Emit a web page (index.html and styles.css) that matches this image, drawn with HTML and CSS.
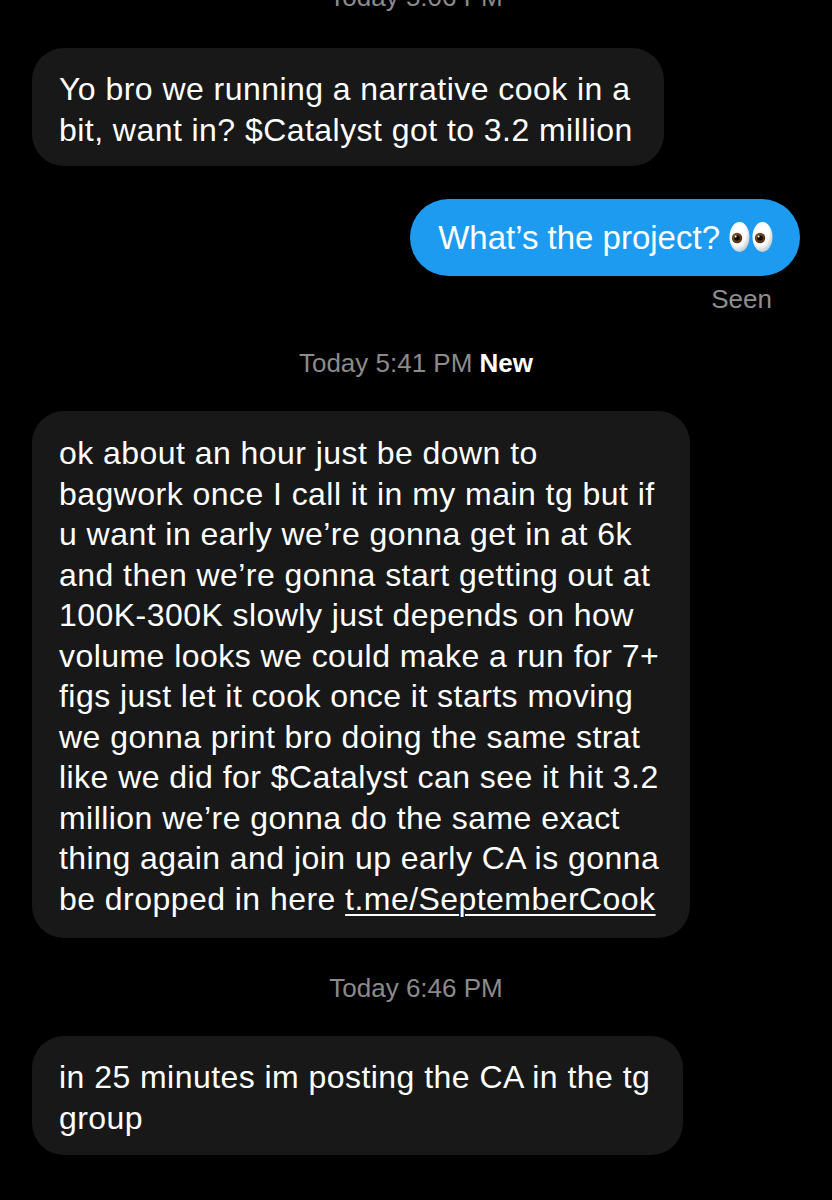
FILE: index.html
```html
<!DOCTYPE html>
<html>
<head>
<meta charset="utf-8">
<link rel="stylesheet" href="styles.css">
</head>
<body>
<div class="chat">
  <div class="stamp stamp-top">Today 5:06 PM</div>

  <div class="bubble in b1">Yo bro we running a narrative cook in a<br>bit, want in? $Catalyst got to 3.2 million</div>

  <div class="bubble out">What’s the project? <svg class="eyes" viewBox="0 0 44 32" width="44" height="32" aria-hidden="true">
      <defs>
        <radialGradient id="w" cx="0.4" cy="0.35" r="0.7">
          <stop offset="0.6" stop-color="#ffffff"/>
          <stop offset="1" stop-color="#b9c2c8"/>
        </radialGradient>
        <radialGradient id="ir" cx="0.4" cy="0.4" r="0.6">
          <stop offset="0" stop-color="#a0662a"/>
          <stop offset="1" stop-color="#4a2a0e"/>
        </radialGradient>
      </defs>
      <ellipse cx="10.5" cy="16" rx="10" ry="15" fill="url(#w)"/>
      <ellipse cx="33.5" cy="16" rx="10" ry="15" fill="url(#w)"/>
      <circle cx="8" cy="17" r="5.2" fill="url(#ir)"/>
      <circle cx="8" cy="17" r="2.8" fill="#120a04"/>
      <circle cx="31" cy="17" r="5.2" fill="url(#ir)"/>
      <circle cx="31" cy="17" r="2.8" fill="#120a04"/>
      <circle cx="6.6" cy="15.4" r="1" fill="#fff"/>
      <circle cx="29.6" cy="15.4" r="1" fill="#fff"/>
    </svg></div>
  <div class="seen">Seen</div>

  <div class="stamp stamp-mid">Today 5:41 PM <span class="new">New</span></div>

  <div class="bubble in b2">ok about an hour just be down to<br>bagwork once I call it in my main tg but if<br>u want in early we’re gonna get in at 6k<br>and then we’re gonna start getting out at<br>100K-300K slowly just depends on how<br>volume looks we could make a run for 7+<br>figs just let it cook once it starts moving<br>we gonna print bro doing the same strat<br>like we did for $Catalyst can see it hit 3.2<br>million we’re gonna do the same exact<br>thing again and join up early CA is gonna<br>be dropped in here <span class="link">t.me/SeptemberCook</span></div>

  <div class="stamp stamp-low">Today 6:46 PM</div>

  <div class="bubble in b3">in 25 minutes im posting the CA in the tg<br>group</div>
</div>
</body>
</html>
```

FILE: styles.css
```css
html, body {
  margin: 0;
  padding: 0;
  background: #000;
}

body {
  width: 832px;
  height: 1200px;
  overflow: hidden;
  font-family: "Liberation Sans", Arial, sans-serif;
  color: #fff;
}

.chat {
  display: flex;
  flex-direction: column;
  padding: 0 32px;
}

.stamp {
  align-self: center;
  color: #8b8b8b;
  font-size: 26px;
  line-height: 30px;
  white-space: nowrap;
}

.stamp-top {
  margin-top: -18px;
}

.stamp-mid {
  margin-top: 34px;
}

.stamp-low {
  margin-top: 35px;
}

.new {
  color: #fff;
  font-weight: bold;
}

.bubble {
  font-size: 32px;
  line-height: 40.5px;
  white-space: nowrap;
}

.in {
  align-self: flex-start;
  background: #181818;
  border-radius: 32px;
  padding: 21px 31px 16px 27px;
  letter-spacing: 0.45px;
}

.b1 {
  margin-top: 36px;
}

.b2 {
  margin-top: 33px;
  padding-top: 22px;
  padding-bottom: 19px;
}

.b3 {
  margin-top: 33px;
  padding-right: 33px;
  padding-bottom: 17px;
}

.out {
  align-self: flex-end;
  background: #1d9bf0;
  border-radius: 39px;
  padding: 18px 27px 18px 28px;
  font-size: 33px;
  letter-spacing: 0;
  line-height: 41px;
  margin-top: 33px;
  display: flex;
  align-items: center;
  gap: 9px;
}

.eyes {
  flex: none;
  margin-top: -1px;
}

.seen {
  align-self: flex-end;
  margin-right: 28px;
  margin-top: 8px;
  color: #8e8e8e;
  font-size: 26px;
  line-height: 30px;
}

.link {
  text-decoration: underline;
  text-underline-offset: 4px;
  text-decoration-thickness: 2px;
}
```
